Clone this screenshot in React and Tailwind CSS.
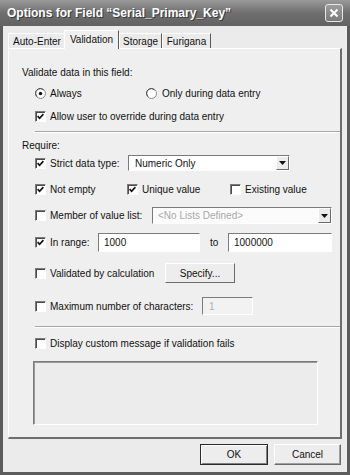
import React from "react";

// classic sunken / raised 3D edges used by the dialog controls
const sunken = "border-t border-l border-b border-r border-t-[#7b7b7b] border-l-[#7b7b7b] border-b-white border-r-white";
const raised = "border-t border-l border-b border-r border-t-white border-l-white border-b-[#6b6b6b] border-r-[#6b6b6b]";

function Check({ on }) {
  return (
    <span className={`w-[11px] h-[11px] shrink-0 bg-white ${sunken} shadow-[inset_1px_1px_0_#4a4a4a] flex items-center justify-center`}>
      {on && (
        <svg width="7" height="7" viewBox="0 0 7 7">
          <path d="M0.6 3.2 L2.6 5.3 L6.4 1.2" stroke="#111" strokeWidth="1.7" fill="none" />
        </svg>
      )}
    </span>
  );
}

function Radio({ on }) {
  return (
    <svg width="11" height="11" viewBox="0 0 11 11" className="shrink-0">
      <circle cx="5.5" cy="5.5" r="5" fill="#fff" stroke="#8a8a8a" />
      <path d="M2 8.5 A4.2 4.2 0 0 1 8.5 2" stroke="#444" fill="none" />
      {on && <circle cx="5.5" cy="5.5" r="1.7" fill="#111" />}
    </svg>
  );
}

function CheckRow({ on, label, className = "" }) {
  return (
    <label className={`flex items-center gap-[4px] shrink-0 ${className}`}>
      <Check on={on} />
      <span className="whitespace-nowrap">{label}</span>
    </label>
  );
}

function Arrow() {
  return (
    <span className={`w-[13px] h-full bg-[#ececec] ${raised} flex items-center justify-center`}>
      <svg width="7" height="4" viewBox="0 0 7 4">
        <path d="M0 0 H7 L3.5 4 Z" fill="#111" />
      </svg>
    </span>
  );
}

function Separator() {
  return <div className="ml-[13px] w-[305px] h-[2px] border-t border-t-[#a6a6a6] border-b border-b-white" />;
}

function Tab({ label, active, className = "" }) {
  return (
    <div
      className={`flex items-center justify-center shrink-0 border-t border-l border-t-white border-l-white border-r border-r-[#5a5a5a] ${
        active ? "h-[19px] -mb-px bg-[#efefef] relative z-10 -ml-[2px] pb-[2px]" : "h-[15px]"
      } ${className}`}
    >
      {label}
    </div>
  );
}

export default function App() {
  return (
    <div className="w-[350px] h-[475px] bg-[#5c5c5c] flex flex-col text-[10px] text-[#111] font-['Liberation_Sans',Arial,sans-serif] overflow-hidden">
      {/* title bar */}
      <div className="h-[26px] shrink-0 flex items-center pl-[7px] pr-[7px] bg-gradient-to-b from-[#9a9a9a] via-[#6f6f6f] to-[#626262]">
        <span className="text-[12px] font-bold text-white flex-1 whitespace-nowrap [text-shadow:1px_1px_0_#3a3a3a]">
          Options for Field “Serial_Primary_Key”
        </span>
        <span className="w-[18px] h-[18px] rounded-[3px] border border-[#e8e8e8] bg-gradient-to-b from-[#9c9c9c] to-[#7a7a7a] flex items-center justify-center">
          <svg width="10" height="10" viewBox="0 0 10 10">
            <path d="M1.5 1.5 L8.5 8.5 M8.5 1.5 L1.5 8.5" stroke="#fff" strokeWidth="2" />
          </svg>
        </span>
      </div>

      {/* window body */}
      <div className="flex-1 mx-[3px] mb-[3px] bg-[#ebebeb] flex flex-col">
        {/* tabs */}
        <div className="mt-[4px] ml-[5px] h-[18px] flex items-end">
          <Tab label="Auto-Enter" className="w-[58px]" />
          <Tab label="Validation" active className="w-[55px]" />
          <Tab label="Storage" className="w-[43px]" />
          <Tab label="Furigana" className="w-[49px]" />
        </div>

        {/* tab panel */}
        <div className="ml-[5px] w-[334px] h-[391px] bg-[#efefef] border-t border-l border-t-white border-l-white border-r-2 border-b-2 border-r-[#6e6e6e] border-b-[#6e6e6e] flex flex-col pl-[13px]">
          <div className="mt-[15px] h-[16px] flex items-center">Validate data in this field:</div>

          <div className="mt-[5px] h-[16px] ml-[13px] flex items-center">
            <label className="w-[111px] flex items-center gap-[4px]">
              <Radio on />
              <span>Always</span>
            </label>
            <label className="flex items-center gap-[5px]">
              <Radio />
              <span>Only during data entry</span>
            </label>
          </div>

          <div className="mt-[7px] h-[16px] ml-[13px] flex items-center">
            <CheckRow on label="Allow user to override during data entry" />
          </div>

          <div className="mt-[7px]">
            <Separator />
          </div>

          <div className="mt-[4px] h-[16px] flex items-center">Require:</div>

          <div className="mt-[2px] h-[16px] ml-[13px] flex items-center">
            <CheckRow on label="Strict data type:" className="w-[93px]" />
            <div className={`w-[162px] h-[16px] bg-white ${sunken} flex items-center justify-between pl-[6px]`}>
              <span>Numeric Only</span>
              <Arrow />
            </div>
          </div>

          <div className="mt-[10px] h-[16px] ml-[13px] flex items-center">
            <CheckRow on label="Not empty" className="w-[92px]" />
            <CheckRow on label="Unique value" className="w-[103px]" />
            <CheckRow label="Existing value" />
          </div>

          <div className="mt-[10px] h-[17px] ml-[13px] flex items-center">
            <CheckRow label="Member of value list:" className="w-[117px]" />
            <div className={`w-[180px] h-[17px] bg-[#fbfbfb] ${sunken} flex items-center justify-between pl-[5px]`}>
              <span className="text-[#a8a8a8]">&lt;No Lists Defined&gt;</span>
              <Arrow />
            </div>
          </div>

          <div className="mt-[9px] h-[19px] ml-[13px] flex items-center">
            <CheckRow on label="In range:" className="w-[63px]" />
            <div className={`w-[102px] h-[19px] bg-white ${sunken} flex items-center pl-[5px]`}>1000</div>
            <span className="w-[28px] pl-[10px]">to</span>
            <div className={`w-[104px] h-[19px] bg-white ${sunken} flex items-center pl-[5px]`}>1000000</div>
          </div>

          <div className="mt-[11px] h-[20px] ml-[13px] flex items-center">
            <CheckRow label="Validated by calculation" className="w-[130px]" />
            <div className={`w-[70px] h-[20px] bg-[#ededed] ${raised} flex items-center justify-center`}>Specify...</div>
          </div>

          <div className="mt-[14px] h-[18px] ml-[13px] flex items-center">
            <CheckRow label="Maximum number of characters:" className="w-[167px]" />
            <div className={`w-[51px] h-[18px] bg-[#f2f2f2] ${sunken} flex items-center pl-[6px] text-[#b0b0b0]`}>1</div>
          </div>

          <div className="mt-[11px]">
            <Separator />
          </div>

          <div className="mt-[7px] h-[16px] ml-[13px] flex items-center">
            <CheckRow label="Display custom message if validation fails" />
          </div>

          <div className={`mt-[10px] ml-[11px] w-[285px] h-[64px] bg-[#ececec] ${sunken} shadow-[inset_1px_1px_0_#9a9a9a]`} />
        </div>

        {/* buttons */}
        <div className="mt-[5px] h-[21px] flex justify-end gap-[6px] pr-[6px]">
          <div className="w-[68px] h-[21px] border border-[#2a2a2a] bg-[#ededed] flex items-center justify-center shadow-[inset_1px_1px_0_#fff,inset_-1px_-1px_0_#808080]">
            OK
          </div>
          <div className={`w-[67px] h-[21px] bg-[#ededed] ${raised} shadow-[inset_-1px_-1px_0_#a0a0a0] flex items-center justify-center`}>
            Cancel
          </div>
        </div>
      </div>
    </div>
  );
}
